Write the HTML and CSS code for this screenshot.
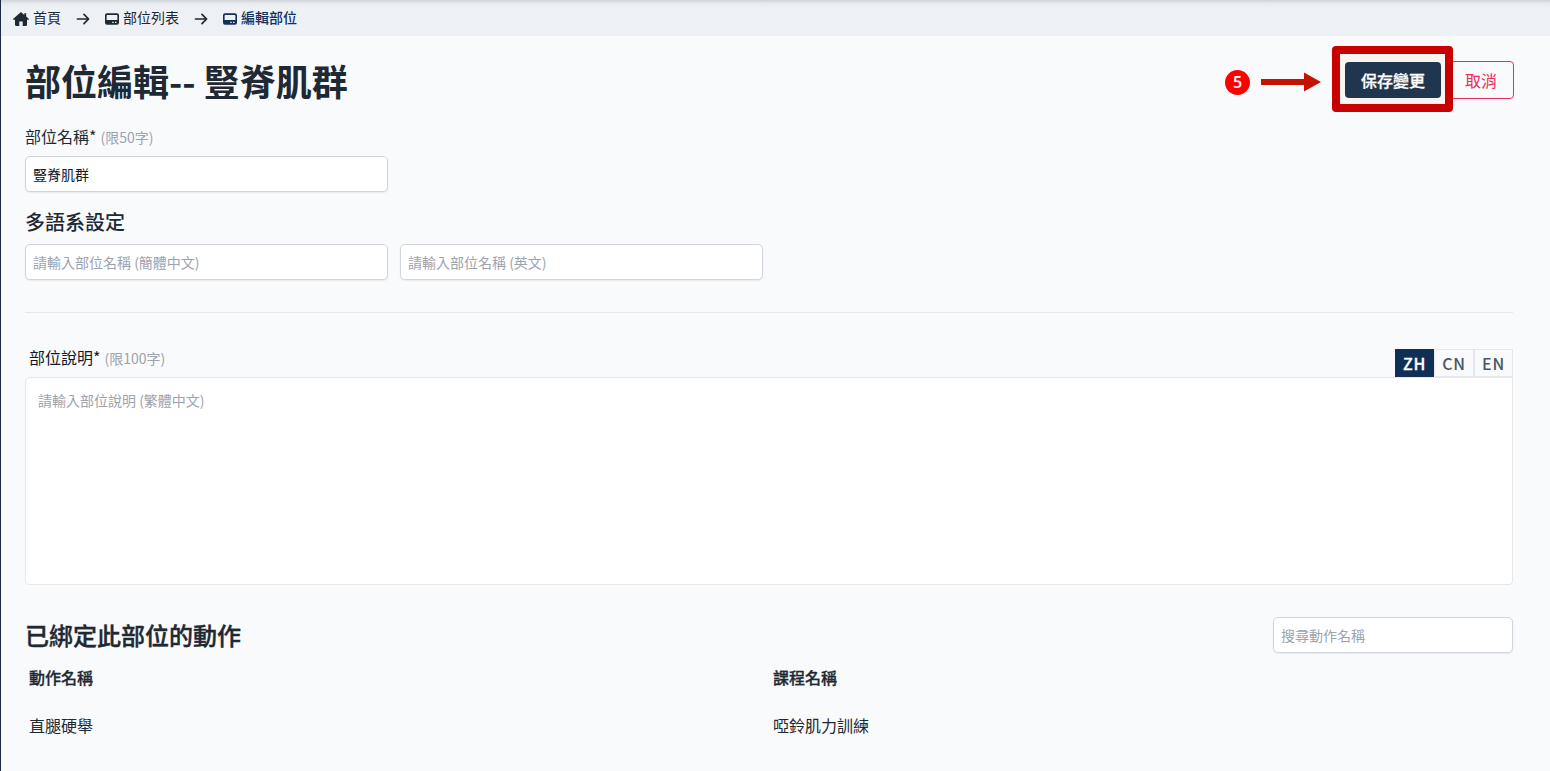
FILE: index.html
```
<!DOCTYPE html>
<html lang="zh-Hant">

<head>
    <meta charset="UTF-8">
    <meta name="viewport" content="width=device-width, initial-scale=1.0">
    <title>編輯部位</title>
    <link rel="stylesheet" href="styles.css">
</head>

<body>
    <svg width="0" height="0" class="sprite">
        <symbol id="icon-arrow" viewBox="0 0 14 12">
            <path d="M1.500 6h11M8 1.300 12.600 6 8 10.700" fill="none" stroke="currentColor" stroke-width="1.700" stroke-linecap="round" stroke-linejoin="round"/>
        </symbol>
        <symbol id="icon-drive" viewBox="0 0 14 12">
            <path fill="currentColor" fill-rule="evenodd" d="M2 .3h10a2 2 0 0 1 2 2v7.400a2 2 0 0 1-2 2H2a2 2 0 0 1-2-2V2.300a2 2 0 0 1 2-2zM2.300 2a.7.7 0 0 0-.7.7v4.400h10.800V2.700a.7.7 0 0 0-.7-.7zM7.200 8.800v1.200h1.500V8.800zM10 8.800v1.200h1.500V8.800z"/>
        </symbol>
    </svg>

    <nav class="breadcrumb">
        <a class="crumb crumb-home">
            <svg width="16" height="14" viewBox="0 0 16 14"><path fill="currentColor" d="M8 0 .3 6.700c-.5.500-.2 1.100.4 1.100H2v5c0 .7.400 1.100 1.100 1.100h3.200V9.500h3.400v4.400h3.200c.7 0 1.100-.4 1.100-1.100v-5h1.300c.6 0 .9-.6.4-1.100L13.200 4.500V1.200h-1.900v1.700z"/></svg>
            首頁
        </a>
        <svg class="arrow" width="14" height="12"><use href="#icon-arrow"/></svg>
        <a class="crumb">
            <svg width="14" height="12"><use href="#icon-drive"/></svg>
            部位列表
        </a>
        <svg class="arrow" width="14" height="12"><use href="#icon-arrow"/></svg>
        <a class="crumb current">
            <svg width="14" height="12"><use href="#icon-drive"/></svg>
            編輯部位
        </a>
    </nav>

    <main class="content">
        <header class="page-header">
            <h1>部位編輯-- 豎脊肌群</h1>
            <div class="actions">
                <div class="step">
                    <span class="step-number">5</span>
                    <svg width="60" height="20" viewBox="0 0 60 20"><path fill="#c41200" d="M0 7h43V.5L60 10 43 19.500V13H0z"/></svg>
                </div>
                <div class="save-wrap">
                    <button class="btn btn-save">保存變更</button>
                </div>
                <button class="btn btn-cancel">取消</button>
            </div>
        </header>

        <label class="field-label" for="name">部位名稱* <small>(限50字)</small></label>
        <input class="input" id="name" type="text" value="豎脊肌群">

        <h3>多語系設定</h3>
        <div class="lang-inputs">
            <input class="input" type="text" placeholder="請輸入部位名稱 (簡體中文)">
            <input class="input" type="text" placeholder="請輸入部位名稱 (英文)">
        </div>

        <hr>

        <div class="desc-header">
            <label class="field-label" for="desc">部位說明* <small>(限100字)</small></label>
            <div class="tabs">
                <button class="tab active">ZH</button>
                <button class="tab">CN</button>
                <button class="tab">EN</button>
            </div>
        </div>
        <textarea class="textarea" id="desc" placeholder="請輸入部位說明 (繁體中文)"></textarea>

        <div class="section-header">
            <h2>已綁定此部位的動作</h2>
            <input class="input search" type="text" placeholder="搜尋動作名稱">
        </div>
        <div class="table">
            <div class="th">動作名稱</div>
            <div class="th">課程名稱</div>
            <div class="td">直腿硬舉</div>
            <div class="td">啞鈴肌力訓練</div>
        </div>
    </main>
</body>

</html>
```
FILE: styles.css
```
* {
    box-sizing: border-box;
}

body {
    margin: 0;
    height: 771px;
    overflow: hidden;
    border-left: 1px solid #1c2a45;
    background-color: #f9fafc;
    color: #1f2933;
    font-family: "Noto Sans CJK TC", sans-serif;
    font-size: 16px;
    line-height: 24px;
}

h1, h2, h3 {
    margin: 0;
}

button, input, textarea {
    font-family: inherit;
    margin: 0;
}

.sprite {
    display: block;
}

/* Breadcrumb */
.breadcrumb {
    display: flex;
    align-items: center;
    height: 36px;
    padding: 0 12px 1px;
    background: linear-gradient(#d0d3d8, #e4e7ec 3px, #edf0f5 7px);
    font-size: 14px;
    line-height: 21px;
}

.breadcrumb svg {
    position: relative;
    top: 1px;
}

.crumb {
    display: flex;
    align-items: center;
    gap: 4px;
}

.current {
    color: #12305a;
    font-weight: 500;
}

.arrow {
    margin: 0 15px;
}

/* Page */
.content {
    padding: 25px 37px 0 24px;
}

.page-header {
    display: flex;
    justify-content: space-between;
    align-items: flex-start;
    height: 63px;
    margin-right: -1px;
}

h1 {
    font-size: 36px;
    line-height: 38px;
    font-weight: 700;
}

.actions {
    display: flex;
    align-items: center;
}

.step {
    display: flex;
    align-items: center;
    gap: 11px;
    margin-right: 24px;
    padding-top: 4px;
}

.step-number {
    width: 25px;
    height: 25px;
    border-radius: 50%;
    background-color: #f00;
    color: #fff;
    font: 600 16px/25px "Open Sans", sans-serif;
    text-align: center;
}

.save-wrap {
    position: relative;
    z-index: 1;
    margin-right: 8px;
}

/* Red highlight around the save button */
.save-wrap::before {
    content: "";
    position: absolute;
    inset: -16px -12px -14px -13px;
    border: 8px solid #c80000;
    border-radius: 4px;
    background-color: #f8f5f1;
}

.btn {
    height: 38px;
    padding: 0 16px 0 15px;
    border: 1px solid #e5315a;
    border-radius: 4px;
    background-color: transparent;
    color: #e5315a;
    font-size: 16px;
    line-height: 24px;
}

.btn-save {
    display: block;
    position: relative;
    height: 36px;
    padding: 0 16px;
    border: none;
    background-color: #20364f;
    color: #fff;
    font-weight: 500;
    -webkit-text-stroke: 0.3px;
}

.field-label {
    display: block;
}

.field-label small {
    margin-left: 0.5px;
    color: #9ca3af;
    font-size: 14px;
}

.input {
    display: block;
    width: 363px;
    height: 36px;
    padding: 0 7px 1px;
    border: 1px solid #d1d5db;
    border-radius: 5px;
    background-color: #fff;
    box-shadow: 0 1px 2px rgba(0, 0, 0, 0.07);
    color: #111827;
    font-size: 14px;
}

::placeholder {
    color: #9ca3af;
    opacity: 1;
}

#name {
    margin-top: 7px;
}

h3 {
    margin: 16px 0 8px;
    font-size: 20px;
    line-height: 28px;
    font-weight: 500;
}

.lang-inputs {
    display: flex;
    gap: 12px;
}

hr {
    margin: 32px 0 36px;
    border: none;
    border-top: 1px solid #e5e7eb;
}

/* Description */
.desc-header {
    display: flex;
    justify-content: space-between;
    height: 28px;
    color: #111827;
}

.desc-header .field-label {
    margin: -4px 0 0 4px;
}

.tabs {
    display: flex;
}

.tab {
    width: 39px;
    height: 28px;
    padding: 0;
    border: 1px solid #e5e7eb;
    background-color: #f9fafc;
    color: #4b5563;
    font-size: 16px;
    line-height: 24px;
    font-weight: 500;
    letter-spacing: 0.8px;
}

.tab + .tab {
    width: 40px;
}

.tab + .tab + .tab {
    width: 39px;
}

.tab.active {
    border-color: #12305a;
    background-color: #102f56;
    color: #fff;
    -webkit-text-stroke: 0.3px;
}

.textarea {
    display: block;
    width: 100%;
    height: 208px;
    padding: 10px 12px;
    border: 1px solid #e5e7eb;
    border-radius: 4px;
    border-top-right-radius: 0;
    background-color: #fff;
    font-size: 14px;
    line-height: 24px;
    resize: none;
}

/* Bound actions */
.section-header {
    display: flex;
    justify-content: space-between;
    align-items: center;
    margin-top: 32px;
}

h2 {
    font-size: 24px;
    line-height: 32px;
    font-weight: 500;
    -webkit-text-stroke: 0.4px;
}

.search {
    width: 240px;
}

.table {
    display: grid;
    grid-template-columns: 1fr 1fr;
    margin-top: 12px;
}

.th, .td {
    padding: 0 4px 24px;
}

.th {
    font-weight: 500;
    -webkit-text-stroke: 0.3px;
}
```
